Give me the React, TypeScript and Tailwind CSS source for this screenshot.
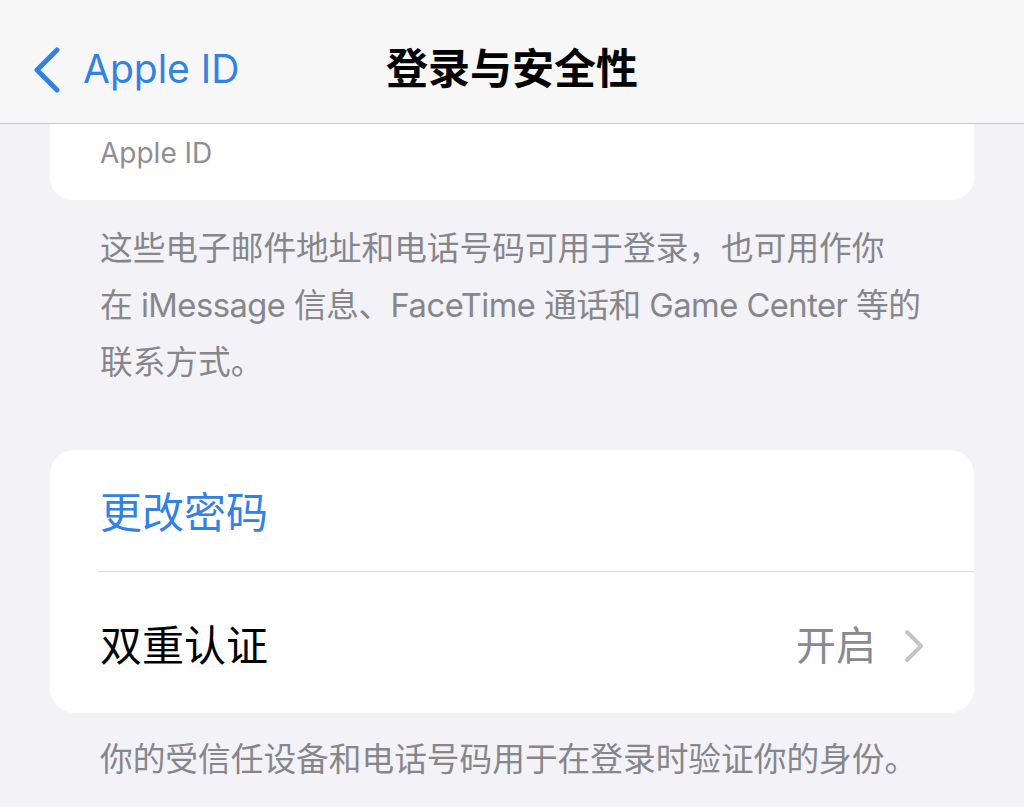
import React from 'react';

const Chevron = ({ className }: { className?: string }) => (
    <svg viewBox="0 0 20 34" className={className} fill="none" stroke="currentColor" strokeWidth={4} strokeLinecap="round" strokeLinejoin="round">
        <path d="M3 3 L17 17 L3 31" />
    </svg>
);

export default function App() {
    return (
        <div className="w-[1024px] h-[807px] overflow-hidden bg-[#f2f2f7] font-['Inter','Noto_Sans_CJK_SC',sans-serif]">
            {/* Nav bar */}
            <div className="relative h-[124px] bg-[#f7f7f7] border-b border-[#c8c8cc] flex items-center pt-[14px]">
                <div className="flex items-center pl-[33px] gap-[22px] text-[#3481e4]">
                    <svg viewBox="0 0 28 46" className="w-[28px] h-[46px] mt-[2px]" fill="none" stroke="currentColor" strokeWidth={5} strokeLinecap="round" strokeLinejoin="round">
                        <path d="M24 3 L4 23 L24 43" />
                    </svg>
                    <span className="text-[39px] leading-none">Apple ID</span>
                </div>
                <div className="absolute inset-x-0 top-0 h-full pt-[14px] flex items-center justify-center pointer-events-none">
                    <span className="text-[42px] font-bold text-black leading-none">登录与安全性</span>
                </div>
            </div>

            {/* Partially hidden card */}
            <div className="mx-[50px] bg-white rounded-b-[22px] h-[76px] px-[50px] flex items-start pt-[15px]">
                <span className="text-[28px] text-[#8e8e93] leading-none">Apple ID</span>
            </div>

            <p className="px-[100px] pt-[20px] text-[32.7px] leading-[57px] text-[#86868b] whitespace-nowrap">
                这些电子邮件地址和电话号码可用于登录，也可用作你<br />
                <span className="tracking-[-0.5px]">在 iMessage 信息、FaceTime 通话和 Game Center 等的</span><br />
                联系方式。
            </p>

            {/* Password / 2FA card */}
            <div className="mx-[50px] mt-[59px] bg-white rounded-[24px] overflow-hidden">
                <div className="h-[121px] px-[50px] flex items-center">
                    <span className="text-[42px] text-[#3481e4] leading-none mt-[4px]">更改密码</span>
                </div>
                <div className="ml-[48px] h-px bg-[#dcdce0]" />
                <div className="h-[141px] pl-[50px] pr-[50px] flex items-center justify-between pt-[6px]">
                    <span className="text-[42px] text-black leading-none">双重认证</span>
                    <div className="flex items-center gap-[28px]">
                        <span className="text-[40px] text-[#8a8a8e] leading-none">开启</span>
                        <Chevron className="w-[20px] h-[34px] text-[#c4c4c7]" />
                    </div>
                </div>
            </div>

            <p className="px-[100px] pt-[18px] text-[32.7px] leading-[57px] text-[#86868b] whitespace-nowrap">
                你的受信任设备和电话号码用于在登录时验证你的身份。
            </p>
        </div>
    );
}
